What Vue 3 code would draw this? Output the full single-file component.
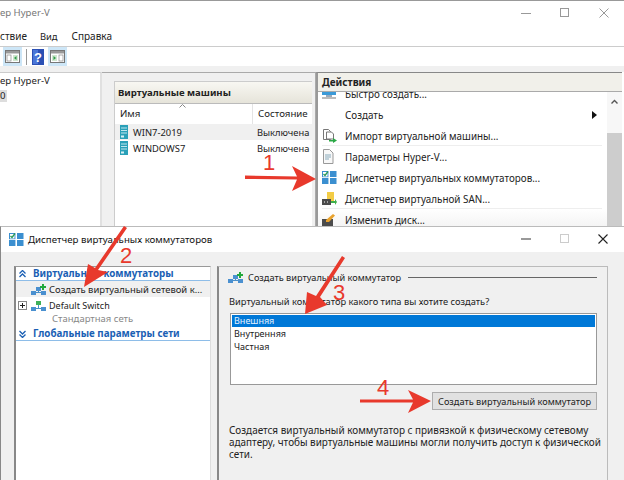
<script setup>
const actions = [
  { label: 'Быстро создать...', icon: 'quick' },
  { label: 'Создать', icon: '', more: true },
  { label: 'Импорт виртуальной машины...', icon: 'import', sep: true },
  { label: 'Параметры Hyper-V...', icon: 'doc' },
  { label: 'Диспетчер виртуальных коммутаторов...', icon: 'switch' },
  { label: 'Диспетчер виртуальной SAN...', icon: 'san', sep: true },
  { label: 'Изменить диск...', icon: 'disk' }
]
const vms = [
  { name: 'WIN7-2019', state: 'Выключена', alt: true },
  { name: 'WINDOWS7', state: 'Выключена', alt: false }
]
const descr = [
  'Создается виртуальный коммутатор с привязкой к физическому сетевому',
  'адаптеру, чтобы виртуальные машины могли получить доступ к физической',
  'сети.'
]
</script>

<template>
  <div class="desk">
    <section class="win back">
      <header class="titlebar">
        <span class="wintitle">ер Hyper-V</span>
        <div class="caption">
          <svg width="10" height="10" viewBox="0 0 10 10"><path d="M0 5.5H10" stroke="#999" /></svg>
          <svg width="10" height="10" viewBox="0 0 10 10"><rect x=".5" y=".5" width="8" height="8" fill="none" stroke="#999" /></svg>
          <svg width="10" height="10" viewBox="0 0 10 10"><path d="M.5.5l9 9M9.5.5l-9 9" stroke="#999" /></svg>
        </div>
      </header>
      <nav class="menu">
        <span class="m1">ствие</span><span class="m2">Вид</span><span class="m3">Справка</span>
      </nav>
      <div class="toolbar">
        <span class="tool hot">
          <svg width="15" height="13" viewBox="0 0 15 13"><rect x=".5" y=".5" width="14" height="12" fill="#fff" stroke="#777" /><rect x="1" y="1" width="13" height="2.5" fill="#999" /><rect x="2" y="5" width="4" height="6" fill="#fff" stroke="#8a8a8a" stroke-width=".7" /><rect x="8" y="5" width="5" height="6" fill="#cfe6cf" /><path d="M11.5 6v4L9 8z" fill="#2f9a46" /></svg>
        </span>
        <span class="tsep"></span>
        <span class="tool help">
          <svg width="12" height="16" viewBox="0 0 12 16"><rect width="12" height="16" fill="#2b50b4" /><rect x="1" y="1" width="5" height="14" fill="#4a76d8" /><text x="6" y="12.5" text-anchor="middle" class="q">?</text></svg>
        </span>
        <span class="tool hot">
          <svg width="15" height="13" viewBox="0 0 15 13"><rect x=".5" y=".5" width="14" height="12" fill="#fff" stroke="#777" /><rect x="1" y="1" width="13" height="2.5" fill="#999" /><rect x="2" y="5" width="5" height="6" fill="#cfe6cf" /><path d="M3.5 6v4L6 8z" fill="#2f9a46" /><rect x="9" y="5" width="4" height="6" fill="#fff" stroke="#8a8a8a" stroke-width=".7" /></svg>
        </span>
      </div>
      <div class="panes">
        <aside class="tree">
          <div class="tree-a">ер Hyper-V</div>
          <div class="tree-b">0</div>
        </aside>
        <main class="center">
          <div class="vmbox">
            <div class="vmhead">Виртуальные машины</div>
            <div class="vmcols">
              <span class="col-name">Имя<svg class="sort" width="7" height="4" viewBox="0 0 7 4"><path d="M.5 3.5l3-3 3 3" fill="none" stroke="#888" /></svg></span>
              <span class="col-state">Состояние</span>
            </div>
            <div v-for="vm in vms" :key="vm.name" class="vmrow" :class="{ alt: vm.alt }">
              <svg class="vmicon" width="8" height="14" viewBox="0 0 8 14"><rect width="8" height="14" fill="#2aa0b8" /><path d="M1 3h6M1 5.5h6M1 8h6" stroke="#bfe6ee" /><rect x="1" y="10.5" width="3" height="2" fill="#d8f0f4" /></svg>
              <span class="vmname">{{ vm.name }}</span>
              <span class="vmstate">{{ vm.state }}</span>
            </div>
          </div>
        </main>
        <aside class="actions">
          <div class="acthead">Действия</div>
          <div class="actbody">
            <ul class="actlist">
              <li v-for="a in actions" :key="a.label" class="act" :class="{ sep: a.sep }">
                <span class="acticon">
                  <svg v-if="a.icon === 'quick'" width="15" height="12" viewBox="0 0 15 12"><rect y="0" width="14" height="7" fill="#3b9ad8" /><path d="M4 7v2h6V7" fill="#9ab" /><rect y="9" width="14" height="2" fill="#bbb" /><rect x="9" y="1" width="4" height="3" fill="#f0c33c" /></svg>
                  <svg v-else-if="a.icon === 'import'" width="15" height="15" viewBox="0 0 15 15"><path d="M1.5 1.5h5l2 2v8h-7z" fill="#fff" stroke="#777" /><path d="M4.5 4h5l2 2v5h-7z" fill="#fff" stroke="#777" /><path d="M7 12h4V10l4 2.5-4 2.5v-1.500H7z" fill="#2aa845" /></svg>
                  <svg v-else-if="a.icon === 'doc'" width="12" height="15" viewBox="0 0 12 15"><path d="M1.500.5h6l3.500 3.500v10.500h-9.500z" fill="#f8f8f8" stroke="#999" /><path d="M3 6h6M3 8h6M3 10h4" stroke="#8ab" /></svg>
                  <svg v-else-if="a.icon === 'switch'" width="15" height="13" viewBox="0 0 15 13"><rect x=".5" y=".5" width="5.500" height="5.500" fill="#fff" stroke="#3b8fd0" /><path d="M1.500 3l1.500 1.500 3-4" fill="none" stroke="#2a9a55" stroke-width="1.300" /><rect x="8" y="0" width="6.500" height="6" fill="#3b8fd0" /><rect x="0" y="7" width="6.500" height="6" fill="#3b8fd0" /><rect x="8" y="7" width="6.500" height="6" fill="#3b8fd0" /><path d="M7.250 0v13M0 6.500h14.500" stroke="#fff" stroke-width=".6" /></svg>
                  <svg v-else-if="a.icon === 'san'" width="15" height="14" viewBox="0 0 15 14"><rect x="5" y="0" width="7" height="10" fill="#f3cc45" /><path d="M9 9h4v-2l2 3-2 3v-2H9z" fill="#3eb04a" /><rect x="0" y="7" width="9" height="6" fill="#4b4b4b" /><path d="M2 10h1M5 10h1" stroke="#fff" /></svg>
                  <svg v-else-if="a.icon === 'disk'" width="14" height="14" viewBox="0 0 14 14"><rect y="6" width="11" height="7" fill="#4b4b4b" /><path d="M4 7L11 1l2 1.500L7 9H4z" fill="#e8a12c" /></svg>
                </span>
                <span class="actlabel">{{ a.label }}</span>
                <svg v-if="a.more" class="more" width="5" height="8" viewBox="0 0 5 8"><path d="M0 0l5 4-5 4z" fill="#111" /></svg>
              </li>
            </ul>
            <div class="scroll">
              <div class="scroll-up"><svg width="7" height="5" viewBox="0 0 7 5"><path d="M.5 4.500l3-3 3 3" fill="none" stroke="#555" stroke-width="1.400" /></svg></div>
              <div class="scroll-thumb"></div>
            </div>
          </div>
        </aside>
      </div>
    </section>

    <section class="win front">
      <header class="titlebar2">
        <svg width="15" height="13" viewBox="0 0 15 13"><rect x=".5" y=".5" width="5.500" height="5.500" fill="#fff" stroke="#3b8fd0" /><path d="M1.500 3l1.500 1.500 3-4" fill="none" stroke="#2a9a55" stroke-width="1.300" /><rect x="8" y="0" width="6.500" height="6" fill="#3b8fd0" /><rect x="0" y="7" width="6.500" height="6" fill="#3b8fd0" /><rect x="8" y="7" width="6.500" height="6" fill="#3b8fd0" /><path d="M7.250 0v13M0 6.500h14.500" stroke="#fff" stroke-width=".6" /></svg>
        <span class="t2">Диспетчер виртуальных коммутаторов</span>
        <div class="caption2">
          <svg width="10" height="10" viewBox="0 0 10 10"><path d="M0 5H10" stroke="#555" stroke-width="1.200" /></svg>
          <svg width="9" height="10" viewBox="0 0 9 10"><rect x=".5" y=".5" width="8" height="8" fill="none" stroke="#ccc" /></svg>
          <svg width="10" height="10" viewBox="0 0 10 10"><path d="M.5.5l9 9M9.500.5l-9 9" stroke="#222" stroke-width="1.100" /></svg>
        </div>
      </header>
      <div class="body2">
        <aside class="nav">
          <div class="navhead">
            <svg width="7" height="8" viewBox="0 0 7 8"><path d="M.5 3.500l3-3 3 3M.5 7l3-3 3 3" fill="none" stroke="#1a5fb4" stroke-width="1.300" /></svg>
            <span>Виртуальные коммутаторы</span>
          </div>
          <div class="navrow selrow">
            <svg class="swicon" width="15" height="11" viewBox="0 0 15 11"><path d="M3 8.500h9M7.500 3v5" stroke="#4a90c8" /><rect x="0" y="7" width="5" height="4" fill="#4a90d0" /><rect x="10" y="7" width="5" height="4" fill="#4a90d0" /><rect x="5" y="3" width="5" height="4" fill="#4a90d0" /><path d="M9 2h2V0h2v2h2v2h-2v2h-2V4H9z" fill="#22a83c" /></svg>
            <span>Создать виртуальный сетевой к...</span>
          </div>
          <div class="navrow">
            <svg class="plus" width="9" height="9" viewBox="0 0 9 9"><rect x=".5" y=".5" width="8" height="8" fill="#fff" stroke="#888" /><path d="M2 4.500h5M4.500 2v5" stroke="#222" /></svg>
            <svg class="swicon2" width="15" height="11" viewBox="0 0 15 11"><path d="M3 8.500h9M7.500 3v5" stroke="#4a90c8" /><rect x="0" y="7" width="5" height="4" fill="#4a90d0" /><rect x="10" y="7" width="5" height="4" fill="#4a90d0" /><rect x="5" y="1" width="5" height="4" fill="#3fb05a" /></svg>
            <span class="dsw">Default Switch</span>
          </div>
          <div class="navsub">Стандартная сеть</div>
          <div class="navhead second">
            <svg width="7" height="8" viewBox="0 0 7 8"><path d="M.5 1l3 3 3-3M.5 4.500l3 3 3-3" fill="none" stroke="#1a5fb4" stroke-width="1.300" /></svg>
            <span>Глобальные параметры сети</span>
          </div>
        </aside>
        <main class="panel">
          <div class="panelhead">
            <svg width="15" height="11" viewBox="0 0 15 11"><path d="M3 8.500h9M7.500 3v5" stroke="#4a90c8" /><rect x="0" y="7" width="5" height="4" fill="#4a90d0" /><rect x="10" y="7" width="5" height="4" fill="#4a90d0" /><rect x="5" y="3" width="5" height="4" fill="#4a90d0" /><path d="M9 2h2V0h2v2h2v2h-2v2h-2V4H9z" fill="#22a83c" /></svg>
            <span>Создать виртуальный коммутатор</span>
            <i class="rule"></i>
          </div>
          <p class="question">Виртуальный коммутатор какого типа вы хотите создать?</p>
          <div class="listbox">
            <div class="opt on">Внешняя</div>
            <div class="opt">Внутренняя</div>
            <div class="opt">Частная</div>
          </div>
          <div class="btnrow"><button class="btn">Создать виртуальный коммутатор</button></div>
          <p class="descr"><span v-for="l in descr" :key="l">{{ l }}</span></p>
        </main>
      </div>
    </section>

    <svg class="arrows" width="624" height="480" viewBox="0 0 624 480">
      <g fill="#e8392c" stroke="none">
        <path d="M245 175.500L297 176.500L292 166L316 179L292 191L297 179.500L245 179z" />
        <path d="M124 226L127 228L98 270L108 272L84 287L88 264L95 268z" />
        <path d="M342 256L345 258L320 297L327 305L305 314L307 292L316 296z" />
        <path d="M360 399.500L413 399.500L408 390L431 401L408 413L413 402.500L360 402.500z" />
      </g>
      <g class="nums">
        <text x="263" y="170">1</text>
        <text x="120" y="263">2</text>
        <text x="333" y="300">3</text>
        <text x="377" y="395">4</text>
      </g>
    </svg>
  </div>
</template>

<style scoped>
.desk {
  position: relative;
  width: 624px;
  height: 480px;
  overflow: hidden;
  background: #fff;
  font-family: "Noto Sans", "Open Sans", sans-serif;
  font-size: 10px;
  color: #222;
}
.win { position: absolute; left: 0; width: 624px; box-sizing: border-box; }
.back { top: 0; height: 226px; border-top: 1px solid #999; background: #fff; }
.titlebar { height: 25px; display: flex; align-items: center; justify-content: space-between; padding-bottom: 2px; box-sizing: border-box; }
.wintitle { color: #777; font-size: 9.600px; }
.caption { display: flex; gap: 29px; padding-right: 15px; }
.menu { height: 20px; display: flex; align-items: center; font-size: 10px; border-bottom: 1px solid #ccc; }
.m1 { margin-right: 13px; }
.m2 { margin-right: 14px; font-size: 9.400px; }
.m3 { font-size: 10px; }
.toolbar { height: 19px; display: flex; align-items: center; }
.tool { display: flex; align-items: center; justify-content: center; }
.tool.hot { width: 19px; height: 19px; background: #cde6f7; }
.toolbar .tool:first-child { margin-left: 3px; }
.tsep { width: 1px; height: 16px; background: #999; margin: 0 5px 0 4px; }
.help { margin-right: 4px; }
.q { font-family: "Liberation Sans", sans-serif; font-size: 13px; font-weight: 700; fill: #fff; }
.panes { height: 161px; border-top: 6px solid #f0f0f0; display: flex; }
.tree { width: 102px; flex: none; border-right: 2px solid #e0e0e0; border-top: 1px solid #ccc; box-sizing: border-box; padding-top: 1px; font-size: 9.600px; }
.tree-a { line-height: 13px; }
.tree-b { width: 7px; height: 12px; line-height: 12px; margin-top: 3px; background: #ddd; }
.center { width: 214px; flex: none; background: #f0f0f0; border-top: 1px solid #aaa; border-right: 1px solid #aaa; box-sizing: border-box; padding: 8px 3px 0 12px; }
.vmbox { background: #fff; border: 1px solid #ccc; border-right: 0; height: 100%; box-sizing: border-box; }
.vmhead { height: 21px; line-height: 21px; padding-left: 3px; font-weight: 700; font-size: 9.600px; background: linear-gradient(#f8f7f2, #e6e4da); border-bottom: 1px solid #bbb; }
.vmcols { height: 20px; display: flex; align-items: flex-start; font-size: 9.700px; }
.col-name { width: 138px; padding-left: 5px; box-sizing: border-box; border-right: 1px solid #e4e4e4; height: 20px; line-height: 19px; position: relative; }
.sort { position: absolute; left: 64px; top: 0; }
.col-state { padding-left: 5px; line-height: 19px; }
.vmrow { height: 16px; display: flex; align-items: center; font-size: 9.400px; }
.vmrow.alt { background: #f0f0f0; }
.vmicon { margin-left: 5px; width: 8px; flex: none; }
.vmname { width: 124px; margin-left: 5px; flex: none; }
.vmstate { font-size: 9.300px; }
.actions { flex: 1; margin-right: 2px; background: #f0f0f0; border-top: 1px solid #888; border-left: 2px solid #999; box-sizing: border-box; min-width: 0; }
.acthead { height: 19px; line-height: 18px; padding-left: 4px; font-weight: 700; font-size: 10px; background: #f1f0ea; border-bottom: 1px solid #aaa; box-sizing: border-box; }
.actbody { display: flex; height: 141px; background: #fff; overflow: hidden; }
.actlist { list-style: none; margin: -9px 0 0; padding: 0; flex: 1; min-width: 0; font-size: 9.850px; }
.act { height: 21px; display: flex; align-items: center; padding: 0 5px 0 4px; position: relative; }
.act.sep::after { content: ""; position: absolute; left: 4px; right: 5px; bottom: 0; height: 1px; background: #eee; }
.act:last-child { background: linear-gradient(#fff, #f2f2f2); }
.acticon { width: 23px; flex: none; display: flex; }
.actlabel { flex: 1; white-space: nowrap; }
.more { margin-right: 5px; }
.scroll { width: 15px; flex: none; background: #f7f7f7; }
.scroll-up { height: 41px; display: flex; justify-content: center; padding-top: 7px; box-sizing: border-box; }
.scroll-thumb { height: 100px; background: #cdcdcd; }

.front { top: 226px; height: 254px; background: #f0f0f0; border-top: 1px solid #bbb; border-left: 1px solid #888; }
.titlebar2 { height: 25px; background: #fff; display: flex; align-items: center; padding-left: 8px; gap: 4px; box-sizing: border-box; }
.t2 { font-size: 9.700px; color: #111; }
.caption2 { margin-left: auto; display: flex; gap: 29px; padding-right: 16px; align-items: center; padding-bottom: 2px; }
.body2 { display: flex; padding: 14px 16px 0 13px; height: 229px; box-sizing: border-box; }
.nav { width: 197px; background: #fff; border-left: 2px solid #888; border-top: 1px solid #999; border-right: 1px solid #ddd; box-sizing: border-box; flex: none; }
.navhead { height: 13px; display: flex; align-items: center; gap: 7px; padding-left: 3px; font-weight: 700; color: #1a5fb4; font-size: 9.800px; border-bottom: 1px solid #8ebde8; }
.navhead.second { margin-top: 3px; }
.navrow { height: 16px; display: flex; align-items: center; white-space: nowrap; font-size: 9.450px; }
.selrow { background: #f0f0f0; }
.dsw { font-size: 9px; }
.swicon { margin-left: 15px; margin-right: 3px; flex: none; }
.plus { margin-left: 2px; flex: none; }
.swicon2 { margin-left: 4px; margin-right: 3px; flex: none; }
.navsub { color: #888; padding-left: 36px; height: 11px; line-height: 11px; font-size: 9.500px; white-space: nowrap; }
.panel { margin-left: 6px; flex: 1; border: 1px solid #bbb; border-left: 2px solid #888; border-bottom: 0; box-sizing: border-box; padding: 3px 10px 0 9px; min-width: 0; }
.panelhead { display: flex; align-items: center; height: 15px; gap: 5px; font-size: 9.200px; }
.panelhead svg { flex: none; }
.rule { flex: 1; height: 1px; background: #666; margin-left: 2px; }
.question { margin: 10px 0 0 1px; font-size: 9.300px; line-height: 14px; white-space: nowrap; }
.listbox { margin: 4px 0 0 2px; height: 72px; background: #fff; border: 1px solid #999; box-sizing: border-box; padding: 1px; font-size: 9px; }
.opt { height: 13px; line-height: 11px; padding-left: 2px; }
.opt.on { background: #0078d7; color: #e6f2ff; margin-bottom: 1px; height: 12px; line-height: 11px; }
.btnrow { display: flex; justify-content: flex-end; margin-top: 7px; }
.btn { width: 165px; height: 18px; padding: 0; background: #e1e1e1; border: 1px solid #adadad; font: inherit; font-size: 9.200px; color: #222; line-height: 15px; white-space: nowrap; }
.descr { margin: 14px 0 0 1px; font-size: 9.950px; line-height: 12px; display: flex; flex-direction: column; white-space: nowrap; }
.arrows { position: absolute; left: 0; top: 0; pointer-events: none; }
.nums text { font-family: "Liberation Sans", sans-serif; font-size: 22px; fill: #e8392c; }
</style>
